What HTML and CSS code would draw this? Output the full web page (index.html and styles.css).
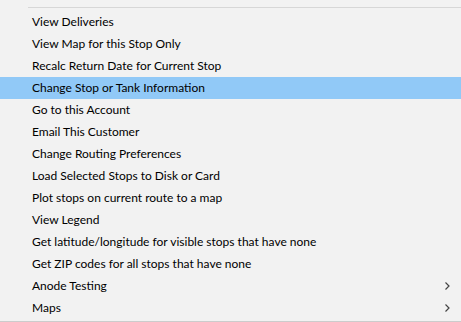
FILE: index.html
```html
<!DOCTYPE html>
<html lang="en">
<head>
    <meta charset="UTF-8">
    <title>Stop Menu</title>
    <link rel="stylesheet" href="styles.css">
</head>
<body>
    <div class="menu">
        <div class="separator"></div>
        <ul class="menu-list">
            <li class="menu-item">View Deliveries</li>
            <li class="menu-item">View Map for this Stop Only</li>
            <li class="menu-item">Recalc Return Date for Current Stop</li>
            <li class="menu-item active">Change Stop or Tank Information</li>
            <li class="menu-item">Go to this Account</li>
            <li class="menu-item">Email This Customer</li>
            <li class="menu-item">Change Routing Preferences</li>
            <li class="menu-item">Load Selected Stops to Disk or Card</li>
            <li class="menu-item">Plot stops on current route to a map</li>
            <li class="menu-item">View Legend</li>
            <li class="menu-item">Get latitude/longitude for visible stops that have none</li>
            <li class="menu-item">Get ZIP codes for all stops that have none</li>
            <li class="menu-item submenu">Anode Testing
                <svg class="arrow" width="5" height="8" viewBox="0 0 5 8"><path d="M0.5 0.5 L4 4 L0.5 7.5" fill="none" stroke="#444" stroke-width="1.2"/></svg>
            </li>
            <li class="menu-item submenu">Maps
                <svg class="arrow" width="5" height="8" viewBox="0 0 5 8"><path d="M0.5 0.5 L4 4 L0.5 7.5" fill="none" stroke="#444" stroke-width="1.2"/></svg>
            </li>
        </ul>
    </div>
</body>
</html>
```

FILE: styles.css
```css
/* Context menu */
body {
    margin: 0;
    padding: 0;
    background-color: #f2f2f2;
    font-family: 'Lato', 'Noto Sans', Arial, sans-serif;
    font-size: 12px;
    color: #000000;
}

.menu {
    width: 461px;
    height: 322px;
    box-sizing: border-box;
    border-bottom: 1px solid #cccccc;
    padding-top: 7px;
}

.separator {
    height: 1px;
    margin-left: 28px;
    background-color: #d7d7d7;
    margin-bottom: 3px;
}

.menu-list {
    list-style: none;
    margin: 0;
    padding: 0;
}

.menu-item {
    height: 22px;
    line-height: 22px;
    padding-left: 32px;
    padding-right: 11px;
    display: flex;
    align-items: center;
    justify-content: space-between;
    white-space: nowrap;
}

.menu-item.active {
    background-color: #91c9f7;
}

.arrow {
    display: block;
}
```
